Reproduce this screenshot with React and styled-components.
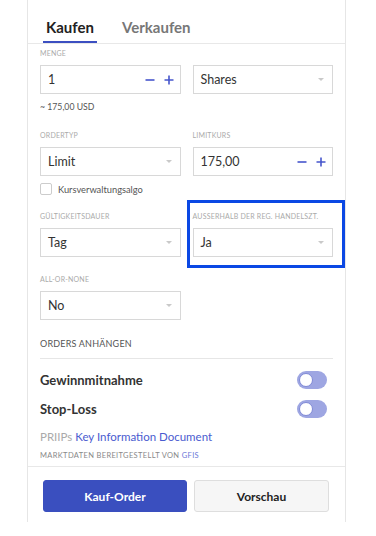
import React from "react"
import styled, { createGlobalStyle } from "styled-components"

const GlobalStyle = createGlobalStyle`
  body {
    margin: 0;
    background: #fff;
    font-family: Lato, "Open Sans", sans-serif;
  }
`;

const Page = styled.div`
  padding-left: 27px;
`;

const Panel = styled.div`
  box-sizing: border-box;
  width: 319px;
  height: 522px;
  border-left: 1px solid #e6e6e6;
  border-right: 1px solid #e6e6e6;
  display: flex;
  flex-direction: column;
`;

const Tabs = styled.div`
  display: flex;
  gap: 22px;
  padding: 0 15px;
  border-bottom: 1px solid #e8e8e8;
`;

const Tab = styled.div`
  padding: 18px 3px 5px;
  line-height: 18px;
  font-size: 15px;
  font-weight: 700;
  color: ${p => (p.$active ? "#222" : "#777")};
  border-bottom: 2px solid ${p => (p.$active ? "#3c4fc1" : "transparent")};
`;

const Body = styled.div`
  flex: 1;
  padding: 4px 12px 0;
`;

const Row = styled.div`
  display: grid;
  grid-template-columns: 1fr 1fr;
  gap: 12px;
  margin-top: ${p => p.$top || 0}px;
`;

const Field = styled.div`
  position: relative;
`;

const Highlight = styled.div`
  position: absolute;
  top: -11px;
  left: -6px;
  right: -12px;
  bottom: -11px;
  border: 3px solid #0b48e4;
  pointer-events: none;
`;

const Label = styled.div`
  font-size: 7px;
  line-height: 10px;
  color: #aaa;
  text-transform: uppercase;
  letter-spacing: 0.2px;
  margin-bottom: 7px;
  white-space: nowrap;
`;

const Box = styled.div`
  box-sizing: border-box;
  height: 29px;
  border: 1px solid #d8d8d8;
  display: flex;
  align-items: center;
  justify-content: space-between;
  padding: 0 6px 0 7px;
  font-size: 12.5px;
  color: #333;
`;

const Arrow = styled.span`
  width: 0;
  height: 0;
  margin-right: 2px;
  border-left: 3.5px solid transparent;
  border-right: 3.5px solid transparent;
  border-top: 3.5px solid #c9c9c9;
`;

const Stepper = styled.div`
  display: flex;
  gap: 9px;
  color: #4656cc;
`;

const Hint = styled.div`
  margin-top: 7px;
  font-size: 8.7px;
  line-height: 12px;
  color: #555;
`;

const CheckRow = styled.label`
  margin-top: 7px;
  display: flex;
  align-items: center;
  gap: 6px;
  font-size: 9.3px;
  color: #555;
`;

const Check = styled.span`
  box-sizing: border-box;
  width: 12px;
  height: 12px;
  border: 1px solid #ccc;
  border-radius: 2px;
`;

const Section = styled.div`
  margin-top: 17px;
  padding-bottom: 7px;
  border-bottom: 1px solid #e6e6e6;
  font-size: 9px;
  line-height: 14px;
  letter-spacing: 0.2px;
  color: #555;
  text-transform: uppercase;
`;

const ToggleList = styled.div`
  margin-top: 6px;
`;

const ToggleRow = styled.div`
  height: 29px;
  display: flex;
  align-items: center;
  justify-content: space-between;
  padding-right: 6px;
  font-size: 13px;
  font-weight: 700;
  color: #333;
`;

const Track = styled.span`
  box-sizing: border-box;
  width: 30px;
  height: 18px;
  border-radius: 9px;
  background: #9ea6e2;
  display: flex;
  align-items: center;
  padding: 2px;
`;

const Knob = styled.span`
  box-sizing: border-box;
  width: 14px;
  height: 14px;
  border-radius: 50%;
  background: #fff;
  border: 1px solid #7f89d6;
`;

const Priips = styled.div`
  margin-top: 6px;
  font-size: 11.5px;
  line-height: 16px;
  color: #aaa;
`;

const Link = styled.span`
  color: ${p => (p.$muted ? "#6b78d8" : "#4a5bcf")};
`;

const Source = styled.div`
  margin-top: 6px;
  font-size: 7.5px;
  line-height: 10px;
  letter-spacing: 0.35px;
  color: #888;
  text-transform: uppercase;
`;

const Footer = styled.div`
  border-top: 1px solid #e8e8e8;
  padding: 13px 16px 10px 15px;
  display: grid;
  grid-template-columns: 144px 1fr;
  gap: 7px;
`;

const Button = styled.button`
  height: 32px;
  border-radius: 3px;
  font-family: inherit;
  font-size: 12px;
  font-weight: 700;
  border: 1px solid ${p => (p.$primary ? "#3a4fbf" : "#dedede")};
  background: ${p => (p.$primary ? "#3a4fbf" : "#f6f6f6")};
  color: ${p => (p.$primary ? "#fff" : "#222")};
`;

const Minus = () => (
  <svg width="10" height="10" viewBox="0 0 10 10">
    <path d="M0.5 5h9" stroke="currentColor" strokeWidth="1.6" />
  </svg>
);

const Plus = () => (
  <svg width="10" height="10" viewBox="0 0 10 10">
    <path d="M0.5 5h9M5 0.5v9" stroke="currentColor" strokeWidth="1.6" />
  </svg>
);

const Select = ({ value }) => (
  <Box>
    <span>{value}</span>
    <Arrow />
  </Box>
);

const Spin = ({ value }) => (
  <Box>
    <span>{value}</span>
    <Stepper>
      <Minus />
      <Plus />
    </Stepper>
  </Box>
);

const Toggle = () => (
  <Track>
    <Knob />
  </Track>
);

export default function App() {
  return (
    <Page>
      <GlobalStyle />
      <Panel>
        <Tabs>
          <Tab $active>Kaufen</Tab>
          <Tab>Verkaufen</Tab>
        </Tabs>
        <Body>
          <Row>
            <Field>
              <Label>Menge</Label>
              <Spin value="1" />
            </Field>
            <Field>
              <Label>&nbsp;</Label>
              <Select value="Shares" />
            </Field>
          </Row>
          <Hint>~ 175,00 USD</Hint>

          <Row $top={17}>
            <Field>
              <Label>Ordertyp</Label>
              <Select value="Limit" />
            </Field>
            <Field>
              <Label>Limitkurs</Label>
              <Spin value="175,00" />
            </Field>
          </Row>
          <CheckRow>
            <Check />
            Kursverwaltungsalgo
          </CheckRow>

          <Row $top={16}>
            <Field>
              <Label>Gültigkeitsdauer</Label>
              <Select value="Tag" />
            </Field>
            <Field>
              <Highlight />
              <Label>Ausserhalb der reg. Handelszt.</Label>
              <Select value="Ja" />
            </Field>
          </Row>

          <Row $top={17}>
            <Field>
              <Label>All-or-none</Label>
              <Select value="No" />
            </Field>
          </Row>

          <Section>Orders anhängen</Section>
          <ToggleList>
            <ToggleRow>
              Gewinnmitnahme
              <Toggle />
            </ToggleRow>
            <ToggleRow>
              Stop-Loss
              <Toggle />
            </ToggleRow>
          </ToggleList>

          <Priips>
            PRIIPs <Link>Key Information Document</Link>
          </Priips>
          <Source>
            Marktdaten bereitgestellt von <Link $muted>GFIS</Link>
          </Source>
        </Body>
        <Footer>
          <Button $primary>Kauf-Order</Button>
          <Button>Vorschau</Button>
        </Footer>
      </Panel>
    </Page>
  );
}
